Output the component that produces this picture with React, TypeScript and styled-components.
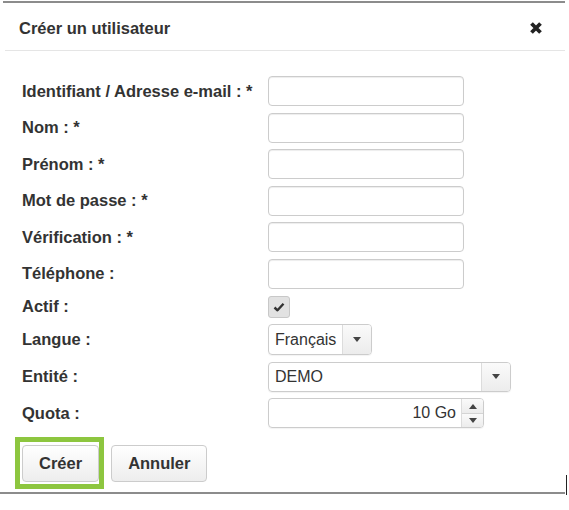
import React from 'react';
import styled, { createGlobalStyle } from 'styled-components';

const GlobalStyle = createGlobalStyle`
  html, body {
    margin: 0;
    padding: 0;
    background: #ffffff;
  }
  body {
    font-family: 'Liberation Sans', Arial, sans-serif;
    color: #333333;
  }
`;

const Page = styled.div`
  width: 569px;
  height: 510px;
  padding-top: 1px;
  box-sizing: border-box;
  overflow: hidden;
  position: relative;
`;

const Dialog = styled.div`
  margin: 0 4px 0 0;
  border-bottom: 2px solid #8c8c8c;
`;

const TopRule = styled.div`
  margin-left: 3px;
  border-top: 2px solid #8c8c8c;
`;

const Header = styled.div`
  height: 48px;
  box-sizing: border-box;
  display: flex;
  align-items: center;
  justify-content: space-between;
  padding: 3px 22px 0 14px;
  margin-left: 5px;
  border-bottom: 1px solid #e5e5e5;
`;

const Title = styled.h4`
  margin: 0;
  font-size: 16.5px;
  font-weight: bold;
  color: #333;
`;

const CloseButton = styled.button`
  border: 0;
  background: none;
  padding: 0;
  width: 14px;
  height: 14px;
  display: flex;
  cursor: pointer;
`;

const Body = styled.div`
  padding: 25px 0 3px 22px;
`;

const FormGrid = styled.div`
  display: grid;
  grid-template-columns: 246px auto;
  row-gap: 6.6px;
  align-items: center;
  justify-items: start;
`;

const Label = styled.label`
  font-size: 16.5px;
  font-weight: bold;
  color: #333;
`;

const TextInput = styled.input`
  box-sizing: border-box;
  width: 196px;
  height: 30px;
  border: 1px solid #cccccc;
  border-radius: 4px;
  box-shadow: inset 0 1px 1px rgba(0, 0, 0, 0.075);
  padding: 0 8px;
  font: inherit;
  font-size: 16px;
`;

const CheckBox = styled.span`
  box-sizing: border-box;
  width: 22px;
  height: 22px;
  border: 1px solid #c8c8c8;
  border-radius: 3px;
  background: #e2e2e2;
  display: flex;
  align-items: center;
  justify-content: center;
`;

const SelectBox = styled.div<{ $width: number }>`
  box-sizing: border-box;
  width: ${(p) => p.$width}px;
  height: 30px;
  border: 1px solid #cccccc;
  border-radius: 4px;
  display: flex;
  align-items: stretch;
  overflow: hidden;
  box-shadow: 0 1px 1px rgba(0, 0, 0, 0.05);
`;

const SelectValue = styled.span<{ $align?: string }>`
  flex: 1;
  display: flex;
  align-items: center;
  justify-content: ${(p) => p.$align || 'flex-start'};
  padding: 0 5px 0 6px;
  font-size: 16px;
  color: #333;
  white-space: nowrap;
`;

const CaretButton = styled.span<{ $width: number }>`
  width: ${(p) => p.$width}px;
  border-left: 1px solid #dcdcdc;
  background: linear-gradient(#fafafa, #ececec);
  display: flex;
  align-items: center;
  justify-content: center;
`;

const Spinner = styled.span`
  width: 21px;
  border-left: 1px solid #dcdcdc;
  display: flex;
  flex-direction: column;
`;

const SpinHalf = styled.span`
  flex: 1;
  display: flex;
  align-items: center;
  justify-content: center;
  background: linear-gradient(#fafafa, #ececec);
  & + & {
    border-top: 1px solid #d4d4d4;
  }
`;

const Actions = styled.div`
  display: flex;
  gap: 7px;
  margin-top: 9px;
  margin-left: -7px;
  align-items: center;
`;

const Highlight = styled.span`
  display: inline-flex;
  border: 5px solid #8dc63f;
  padding: 3px 0 2px 2px;
`;

const Button = styled.button`
  box-sizing: border-box;
  height: 37px;
  padding: 0 16px;
  border: 1px solid #cccccc;
  border-radius: 4px;
  background: linear-gradient(#ffffff, #ededed);
  font-family: inherit;
  font-size: 16.5px;
  font-weight: bold;
  color: #333;
`;

const EdgeMark = styled.span`
  position: absolute;
  left: 566px;
  top: 475px;
  width: 1px;
  height: 20px;
  background: #222;
`;

const Caret = ({ up = false }: { up?: boolean }) => (
  <svg width='8' height='5' viewBox='0 0 8 5'>
    <path d={up ? 'M0 5 L4 0 L8 5 Z' : 'M0 0 L8 0 L4 5 Z'} fill='#444' />
  </svg>
);

const rows = [
  'Identifiant / Adresse e-mail : *',
  'Nom : *',
  'Prénom : *',
  'Mot de passe : *',
  'Vérification : *',
  'Téléphone :'
];

export default function App() {
  return (
    <Page>
      <GlobalStyle />
      <Dialog>
        <TopRule />
        <Header>
          <Title>Créer un utilisateur</Title>
          <CloseButton aria-label='Fermer'>
            <svg width='14' height='14' viewBox='0 0 14 14'>
              <path
                d='M2.5 2.5 L11.5 11.5 M11.5 2.5 L2.5 11.5'
                stroke='#222'
                strokeWidth='3.8'
              />
            </svg>
          </CloseButton>
        </Header>
        <Body>
          <FormGrid>
            {rows.map((r) => (
              <React.Fragment key={r}>
                <Label>{r}</Label>
                <TextInput type={r.startsWith('Mot') || r.startsWith('Vér') ? 'password' : 'text'} />
              </React.Fragment>
            ))}
            <Label>Actif :</Label>
            <CheckBox>
              <svg width='12' height='10' viewBox='0 0 12 10'>
                <path
                  d='M1.5 5.5 L4.5 8.3 L10.5 1.8'
                  stroke='#333'
                  strokeWidth='2.4'
                  fill='none'
                  strokeLinejoin='round'
                />
              </svg>
            </CheckBox>
            <Label>Langue :</Label>
            <SelectBox $width={104} style={{ height: 31 }}>
              <SelectValue>Français</SelectValue>
              <CaretButton $width={28}>
                <Caret />
              </CaretButton>
            </SelectBox>
            <Label>Entité :</Label>
            <SelectBox $width={243}>
              <SelectValue>DEMO</SelectValue>
              <CaretButton $width={28}>
                <Caret />
              </CaretButton>
            </SelectBox>
            <Label>Quota :</Label>
            <SelectBox $width={216}>
              <SelectValue $align='flex-end'>10 Go</SelectValue>
              <Spinner>
                <SpinHalf>
                  <Caret up />
                </SpinHalf>
                <SpinHalf>
                  <Caret />
                </SpinHalf>
              </Spinner>
            </SelectBox>
          </FormGrid>
          <Actions>
            <Highlight>
              <Button>Créer</Button>
            </Highlight>
            <Button>Annuler</Button>
          </Actions>
        </Body>
      </Dialog>
      <EdgeMark />
    </Page>
  );
}
